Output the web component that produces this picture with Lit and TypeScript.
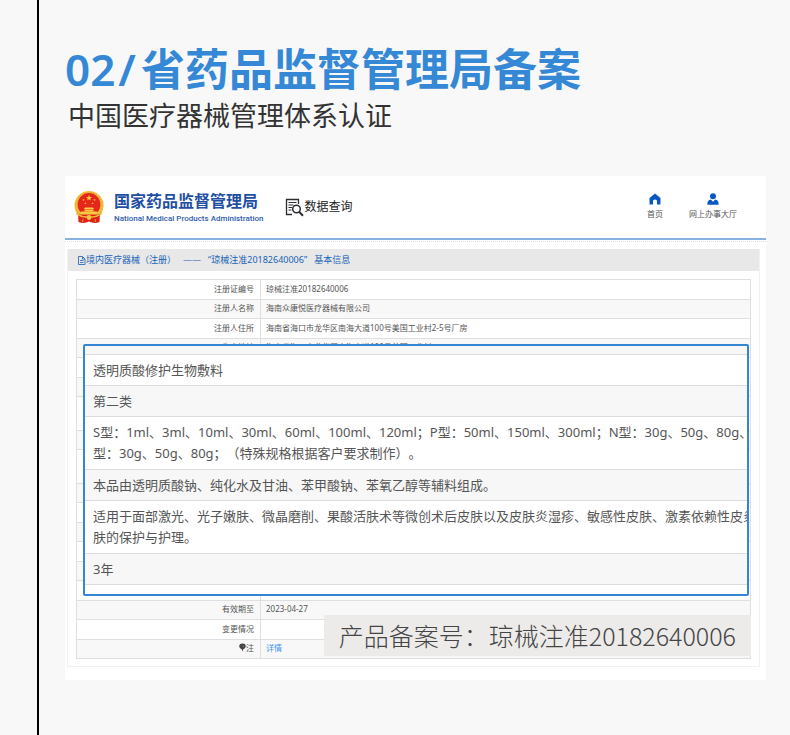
import { LitElement, html, css, svg } from "lit";
import { customElement } from "lit/decorators.js";

interface Row {
  label: string;
  value: string;
  link?: boolean;
  pin?: boolean;
  tall?: boolean;
}

const rows: Row[] = [
  { label: "注册证编号", value: "琼械注准20182640006" },
  { label: "注册人名称", value: "海南众康悦医疗器械有限公司" },
  { label: "注册人住所", value: "海南省海口市龙华区南海大道100号美国工业村2-5号厂房" },
  { label: "生产地址", value: "海南省海口市龙华区南海大道100号美国工业村" },
  { label: "", value: "" },
  { label: "", value: "" },
  { label: "", value: "", tall: true },
  { label: "", value: "" },
  { label: "", value: "", tall: true },
  { label: "", value: "" },
  { label: "", value: "" },
  { label: "", value: "" },
  { label: "", value: "" },
  { label: "", value: "" },
  { label: "", value: "" },
  { label: "有效期至", value: "2023-04-27" },
  { label: "变更情况", value: "" },
  { label: "注", value: "详情", link: true, pin: true },
];

const details: string[][] = [
  ["透明质酸修护生物敷料"],
  ["第二类"],
  [
    "S型：1ml、3ml、10ml、30ml、60ml、100ml、120ml；P型：50ml、150ml、300ml；N型：30g、50g、80g、",
    "型：30g、50g、80g；（特殊规格根据客户要求制作）。",
  ],
  ["本品由透明质酸钠、纯化水及甘油、苯甲酸钠、苯氧乙醇等辅料组成。"],
  [
    "适用于面部激光、光子嫩肤、微晶磨削、果酸活肤术等微创术后皮肤以及皮肤炎湿疹、敏感性皮肤、激素依赖性皮炎",
    "肤的保护与护理。",
  ],
  ["3年"],
];

const star = (cx: number, cy: number, r: number) => {
  const pts: string[] = [];
  for (let i = 0; i < 10; i++) {
    const a = (Math.PI / 5) * i - Math.PI / 2;
    const k = i % 2 ? r * 0.4 : r;
    pts.push(`${(cx + k * Math.cos(a)).toFixed(2)},${(cy + k * Math.sin(a)).toFixed(2)}`);
  }
  return svg`<polygon points=${pts.join(" ")} fill="#f6cf3c"></polygon>`;
};

const emblem = html`<svg class="emblem" viewBox="0 0 30 32" aria-hidden="true">
  <circle cx="15" cy="14.5" r="14.5" fill="#f3bd3a"></circle>
  <circle cx="15" cy="14.5" r="13.2" fill="none" stroke="#e8a62e" stroke-width="1" stroke-dasharray="1.5 1.5"></circle>
  <path d="M4 23 L26 23 L25.5 31 Q20 33 15 30.5 Q10 33 4.5 31 Z" fill="#dd2218"></path>
  <circle cx="15" cy="13.5" r="11.4" fill="#e5261b"></circle>
  ${star(15, 7, 3.2)}${star(9.5, 9, 1.3)}${star(20.5, 9, 1.3)}${star(11.5, 12.3, 1.3)}${star(18.5, 12.3, 1.3)}
  <path d="M11 16.5h8l1.2 1.6h-10.4z M10.5 18.6h9v1.6h-9z M7 20.6h16l1.2 3H5.8z" fill="#f8cb45"></path>
  <path d="M2 21 Q7 26 15 25 Q23 26 28 21 L27.5 23.5 Q22 27.5 15 26.6 Q8 27.5 2.5 23.5Z" fill="#f1b83a"></path>
  <circle cx="15" cy="26.5" r="2.4" fill="#f5c644"></circle>
  <path d="M9 28 L8.5 31 M21 28 L21.5 31" stroke="#f3bd3a" stroke-width="0.8"></path>
</svg>`;

const searchDoc = html`<svg class="search-doc" viewBox="0 0 19 19" fill="none" stroke="#2b2d33" aria-hidden="true">
  <path d="M7 16.5H1.5V1.5h12V6" stroke-width="1.3"></path>
  <path d="M3.5 4.5h8M3.5 7h5M3.5 9.5h3.5M3.5 12h3" stroke-width="1"></path>
  <circle cx="11.5" cy="11" r="3.8" stroke-width="1.5"></circle>
  <path d="M14.3 14 18 17.8" stroke-width="2"></path>
</svg>`;

const home = html`<svg class="nav-icon" viewBox="0 0 12 12" aria-hidden="true">
  <path d="M6 0.5 11.5 5v6.5H8V8Q8 6.5 6 6.5T4 8v3.5H0.5V5z" fill="#0a57c2"></path>
</svg>`;

const user = html`<svg class="nav-icon" viewBox="0 0 12 12" aria-hidden="true">
  <circle cx="6" cy="3.2" r="3" fill="#0a57c2"></circle>
  <path d="M0.3 11.7Q0.3 7 3.8 6.5L6 8.8 8.2 6.5Q11.7 7 11.7 11.7z" fill="#0a57c2"></path>
</svg>`;

const docIcon = html`<svg class="doc-icon" viewBox="0 0 9 9" fill="none" stroke="#2c6cb8" stroke-width="0.9" aria-hidden="true">
  <path d="M1.5 0.5h4l2.5 2.5v5.5h-6.5zM5.5 0.5v2.5h2.5M3 4.5h3.5M3 6.5h3.5"></path>
</svg>`;

const pinIcon = html`<svg class="pin" viewBox="0 0 7 9" aria-hidden="true">
  <path d="M3.5 0.5A3.2 3.2 0 0 1 6.8 3.7Q6.2 5.2 4.3 6.3L3.5 8.5 2.700 6.3Q0.8 5.2 0.2 3.7A3.2 3.2 0 0 1 3.5 0.5z" fill="#444"></path>
  <path d="M4.3 2.8v1.2" stroke="#aaa" stroke-width="0.8"></path>
</svg>`;

@customElement("app-root")
export class AppRoot extends LitElement {
  static styles = css`
    :host {
      display: block;
      background: #f8f8f8;
      font-family: "Noto Sans", "Noto Sans CJK SC", sans-serif;
      text-spacing-trim: space-all;
      color: #555;
    }
    * {
      box-sizing: border-box;
    }
    .page {
      margin-left: 37px;
      border-left: 2px solid #000;
      min-height: 100vh;
      padding: 39px 24px 55px 26px;
    }
    h1,
    h2,
    p {
      margin: 0;
      font-weight: 400;
    }
    .title {
      font-size: 44px;
      line-height: 56px;
      font-weight: 600;
      color: #3588d5;
      white-space: nowrap;
    }
    .title-cjk {
      font-family: "Noto Sans CJK SC", sans-serif;
      font-weight: 700;
    }
    .slash {
      margin: 0 5px 0 3px;
    }
    .subtitle {
      padding-left: 3px;
      font: 400 27px/36px "Noto Sans CJK SC", sans-serif;
      color: #333;
    }
    .card {
      margin-top: 43px;
      background: #fff;
      padding-bottom: 13px;
    }
    .top {
      display: flex;
      align-items: center;
      height: 62px;
      padding: 0 29px 0 9px;
    }
    .emblem {
      width: 30px;
      height: 32px;
      margin-right: 10px;
    }
    .brand-name {
      margin-bottom: 3px;
      font: 700 16px/20px "Noto Sans CJK SC", sans-serif;
      color: #1f4fa3;
    }
    .brand-en {
      font: 500 8px/12px Roboto, sans-serif;
      color: #2f5cab;
    }
    .query {
      display: flex;
      align-items: center;
      margin-left: 22px;
      font-size: 12px;
      line-height: 18px;
      color: #222;
    }
    .search-doc {
      width: 19px;
      height: 19px;
    }
    .nav {
      display: flex;
      gap: 26px;
      margin-left: auto;
      padding-bottom: 2px;
    }
    .nav a {
      display: flex;
      flex-direction: column;
      align-items: center;
      gap: 3px;
      font-size: 8px;
      line-height: 12px;
      color: #555;
      text-decoration: none;
    }
    .nav-icon {
      width: 12px;
      height: 12px;
    }
    .rule {
      height: 4px;
      border-top: 2px solid #86b1e0;
      border-bottom: 1px dotted #ddd;
    }
    .panel {
      margin: 7px 6px 0 2px;
      border: 1px solid #f1f1f1;
      border-top: 0;
      padding-bottom: 7px;
    }
    .panel-title {
      display: flex;
      align-items: center;
      gap: 7px;
      height: 22px;
      padding-left: 9px;
      background: #e8e8e8;
      font-size: 9px;
      line-height: 20px;
      color: #1763b8;
      white-space: nowrap;
    }
    .kind {
      display: flex;
      align-items: center;
    }
    .doc-icon {
      width: 9px;
      height: 9px;
    }
    .record {
      position: relative;
      margin: 8px 8px 0;
    }
    table {
      width: 100%;
      border-collapse: collapse;
      table-layout: fixed;
    }
    .base {
      font-size: 8px;
      line-height: 12px;
    }
    .base tr {
      height: 20px;
    }
    .base tr:nth-child(even) {
      height: 19px;
      background: #f8f8f8;
    }
    .base .tall {
      height: 34px;
    }
    .base th,
    .base td {
      border: 1px solid #dfdfe1;
      padding: 0 5px 2px;
      font-weight: 400;
      text-align: left;
    }
    .base th {
      width: 184px;
      padding-right: 6px;
      text-align: right;
    }
    .pin {
      width: 7px;
      height: 9px;
      vertical-align: -1px;
    }
    .more {
      color: #3c8ff0;
      text-decoration: none;
    }
    .zoomed {
      position: absolute;
      left: 7px;
      right: 2px;
      top: 65px;
      border: 2px solid #3585d2;
      border-radius: 2px;
      background: #f7f7f7;
      overflow: hidden;
      padding-top: 8px;
    }
    .detail {
      font-size: 13px;
      line-height: 21px;
      color: #555;
      white-space: nowrap;
    }
    .detail td {
      border-top: 1px solid #dcdcdc;
      padding: 5px 8px 4px;
      background: #fff;
    }
    .detail .double td {
      padding-bottom: 5px;
    }
    .detail tr:nth-child(even) td {
      background: #f7f7f7;
    }
    .detail .end td {
      padding: 0;
      height: 9px;
      background: #fff;
    }
    .number {
      position: absolute;
      right: 0;
      bottom: 3px;
      padding: 0 15px;
      background: #ecebea;
      font: 300 25px/41px "Noto Sans CJK SC", sans-serif;
      color: #444;
      white-space: nowrap;
    }
  `;

  render() {
    return html`<main class="page">
      <h1 class="title">02<span class="slash">/</span><span class="title-cjk">省药品监督管理局备案</span></h1>
      <h2 class="subtitle">中国医疗器械管理体系认证</h2>
      <section class="card">
        <header class="top">
          ${emblem}
          <div>
            <p class="brand-name">国家药品监督管理局</p>
            <p class="brand-en">National Medical Products Administration</p>
          </div>
          <div class="query">${searchDoc}<span>数据查询</span></div>
          <nav class="nav">
            <a href="#home">${home}<span>首页</span></a>
            <a href="#hall">${user}<span>网上办事大厅</span></a>
          </nav>
        </header>
        <div class="rule"></div>
        <section class="panel">
          <div class="panel-title">
            <span class="kind">${docIcon}境内医疗器械（注册）</span>
            <span>——</span>
            <span>“琼械注准20182640006”</span>
            <span>基本信息</span>
          </div>
          <div class="record">
            <table class="base">
              <tbody>
                ${rows.map(
                  (r) => html`<tr class=${r.tall ? "tall" : ""}>
                    <th scope="row">${r.pin ? pinIcon : ""}${r.label}</th>
                    <td>${r.link ? html`<a class="more" href="#detail">${r.value}</a>` : r.value}</td>
                  </tr>`
                )}
              </tbody>
            </table>
            <div class="zoomed">
              <table class="detail">
                <tbody>
                  ${details.map(
                    (lines) => html`<tr class=${lines.length > 1 ? "double" : ""}>
                      <td>${lines.map((l, i) => html`${i ? html`<br />` : ""}${l}`)}</td>
                    </tr>`
                  )}
                  <tr class="end"><td></td></tr>
                </tbody>
              </table>
            </div>
            <p class="number">产品备案号：琼械注准20182640006</p>
          </div>
        </section>
      </section>
    </main>`;
  }
}
